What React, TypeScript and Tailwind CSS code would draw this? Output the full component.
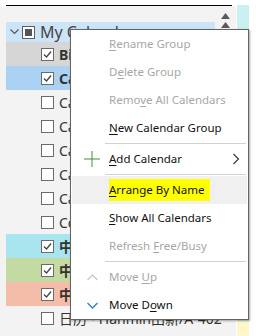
import React from 'react';

type Row = {
  label: string;
  bg: string;
  checked: boolean;
  bold?: boolean;
};

const rows: Row[] = [
  { label: 'Birthdays', bg: 'bg-[#d6d6d6]', checked: true, bold: true },
  { label: 'Calendar', bg: 'bg-[#abd2f2]', checked: true, bold: true },
  { label: 'Calendar 1', bg: '', checked: false },
  { label: 'Calendar 2', bg: '', checked: false },
  { label: 'Calendar 3', bg: '', checked: false },
  { label: 'Calendar 4', bg: '', checked: false },
  { label: 'Calendar 5', bg: '', checked: false },
  { label: 'Contacts', bg: '', checked: false },
  { label: '中国节假日', bg: 'bg-[#a8e5ee]', checked: true, bold: true },
  { label: '中国农历', bg: 'bg-[#c3dba2]', checked: true, bold: true },
  { label: '中文日历', bg: 'bg-[#f4bda9]', checked: true, bold: true },
  { label: '日历 - Hanmin田新/A-402', bg: '', checked: false },
];

function Checkbox({ checked }: { checked: boolean }) {
  return (
    <div className="w-[13px] h-[13px] border border-[#6b6b6b] bg-white flex items-center justify-center">
      {checked && (
        <svg width="11" height="11" viewBox="0 0 11 11">
          <path d="M2 5.5 L4.5 8 L9 2.5" fill="none" stroke="#444" strokeWidth="1.3" />
        </svg>
      )}
    </div>
  );
}

type Item = {
  before: string;
  key: string;
  after: string;
  disabled?: boolean;
  icon?: 'plus' | 'up' | 'down';
  sub?: boolean;
  hover?: boolean;
};

function MenuItem({ item }: { item: Item }) {
  const text = item.disabled ? 'text-[#a7a7a7]' : 'text-[#111]';
  return (
    <div className={`h-[28px] flex items-center ${item.hover ? 'bg-[#f0f0f0]' : ''}`}>
      <div className="w-[37px] flex items-center justify-center pl-[3px]">
        {item.icon === 'plus' && (
          <svg width="16" height="16" viewBox="0 0 16 16">
            <path d="M8 0 V16 M0 8 H16" stroke="#3f8f3f" strokeWidth="1" />
          </svg>
        )}
        {item.icon === 'up' && (
          <svg width="11" height="7" viewBox="0 0 11 7">
            <path d="M0.5 6 L5.5 1 L10.5 6" fill="none" stroke="#c4c4c4" strokeWidth="1.2" />
          </svg>
        )}
        {item.icon === 'down' && (
          <svg width="11" height="7" viewBox="0 0 11 7">
            <path d="M0.5 1 L5.5 6 L10.5 1" fill="none" stroke="#2b7cd3" strokeWidth="1.3" />
          </svg>
        )}
      </div>
      <span className={`flex-1 text-[11.5px] ${text} ${item.hover ? 'bg-[#ffff00] py-[2px]' : ''}`}>
        {item.before}
        <span className="underline underline-offset-2">{item.key}</span>
        {item.after}
      </span>
      {item.hover && <div className="w-[37px]" />}
      {item.sub && (
        <svg width="8" height="12" viewBox="0 0 8 12" className="mr-[7px]">
          <path d="M1.5 1 L6.5 6 L1.5 11" fill="none" stroke="#333" strokeWidth="1.1" />
        </svg>
      )}
    </div>
  );
}

function Sep() {
  return <div className="h-px bg-[#d2d2d2] ml-[33px] mr-[1px] my-px" />;
}

export default function App() {
  return (
    <div
      className="relative w-[256px] h-[336px] bg-white overflow-hidden"
      style={{ fontFamily: '"Noto Sans", "Noto Sans CJK SC", sans-serif' }}
    >
      <div className="flex h-full">
        <div className="w-[236px] flex flex-col">
          <div className="h-[5px] bg-white" />
          <div className="h-px bg-black ml-[6px] mr-[4px]" />
          <div className="flex-1 bg-[#f3f3f3] flex">
            <div className="w-[209px] ml-[6px] pt-[16px] flex flex-col">
              {/* My Calendars group header */}
              <div className="h-[20px] bg-[#cce4f7] flex items-center">
                <svg width="9" height="6" viewBox="0 0 9 6" className="ml-[4px]">
                  <path d="M0.5 0.5 L4.5 4.5 L8.5 0.5" fill="none" stroke="#555" strokeWidth="1.1" />
                </svg>
                <div className="ml-[3px] w-[13px] h-[13px] border border-[#5e5e5e] bg-white flex items-center justify-center">
                  <div className="w-[7px] h-[7px] bg-[#555]" />
                </div>
                <span className="ml-[5px] text-[16px] text-[#444] leading-none">My Calendars</span>
              </div>
              {rows.map((r, i) => (
                <div key={i} className={`h-[24px] flex items-center ${r.bg}`}>
                  <div className="ml-[35px]">
                    <Checkbox checked={r.checked} />
                  </div>
                  <span
                    className={`ml-[5px] text-[14px] text-[#333] whitespace-nowrap ${r.bold ? 'font-bold' : ''}`}
                  >
                    {r.label}
                  </span>
                </div>
              ))}
            </div>
            <div className="flex-1 flex flex-col items-center pt-[7px] gap-[3px]">
              <svg width="9" height="6" viewBox="0 0 9 6">
                <path d="M4.5 0 L9 6 H0 Z" fill="#5a5a5a" />
              </svg>
              <svg width="9" height="6" viewBox="0 0 9 6">
                <path d="M4.5 0 L9 6 H0 Z" fill="#5a5a5a" />
              </svg>
            </div>
          </div>
        </div>
        <div className="w-[1px]" />
        <div className="w-[12px] flex flex-col pt-[5px]">
          <div className="flex-1 bg-[#c9f1f2]" />
          <div className="h-[15px] bg-[#fff7c8]" />
        </div>
      </div>

      {/* context menu */}
      <div className="absolute left-[70px] top-[29px] w-[179px] bg-white border border-[#646464] shadow-[1px_1px_2px_rgba(0,0,0,0.35)] px-px">
        <MenuItem item={{ before: '', key: 'R', after: 'ename Group', disabled: true }} />
        <MenuItem item={{ before: 'D', key: 'e', after: 'lete Group', disabled: true }} />
        <MenuItem item={{ before: 'Remo', key: 'v', after: 'e All Calendars', disabled: true }} />
        <MenuItem item={{ before: '', key: 'N', after: 'ew Calendar Group' }} />
        <Sep />
        <MenuItem item={{ before: '', key: 'A', after: 'dd Calendar', icon: 'plus', sub: true }} />
        <Sep />
        <MenuItem item={{ before: '', key: 'A', after: 'rrange By Name', hover: true }} />
        <MenuItem item={{ before: '', key: 'S', after: 'how All Calendars' }} />
        <MenuItem item={{ before: 'Refresh ', key: 'F', after: 'ree/Busy', disabled: true }} />
        <Sep />
        <MenuItem item={{ before: 'Move ', key: 'U', after: 'p', disabled: true, icon: 'up' }} />
        <MenuItem item={{ before: 'Move D', key: 'o', after: 'wn', icon: 'down' }} />
      </div>
    </div>
  );
}
